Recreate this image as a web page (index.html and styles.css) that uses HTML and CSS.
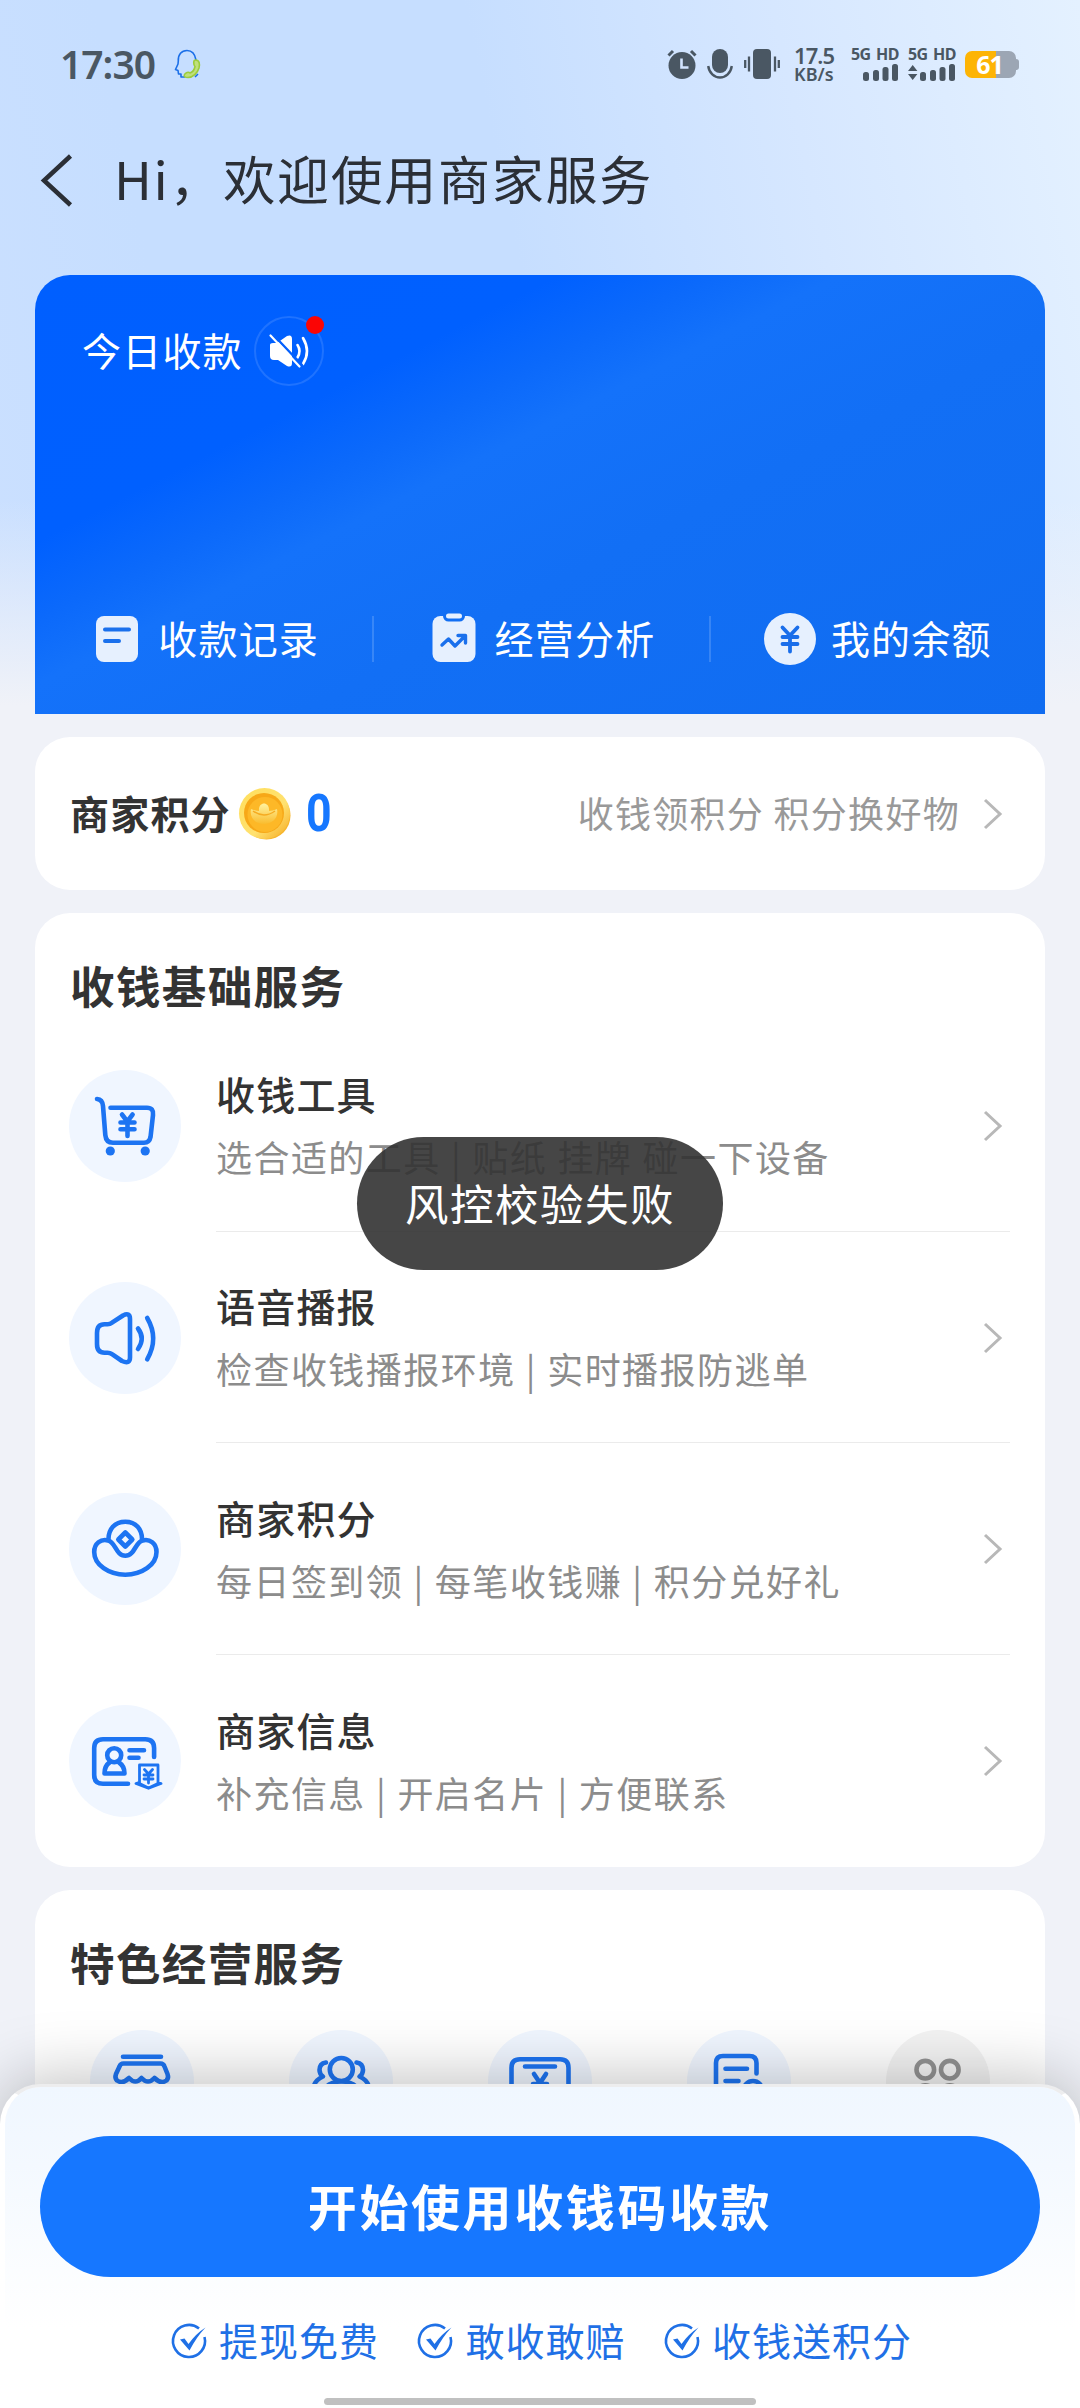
FILE: index.html
```html
<!DOCTYPE html>
<html lang="zh-CN">
<head>
<meta charset="utf-8">
<title>商家服务</title>
<link rel="stylesheet" href="styles.css">
</head>
<body>
<div class="screen">
  <div class="statusbar">
    <span class="clock">17:30</span>
    <svg class="call" width="28" height="30" viewBox="0 0 28 30" fill="none" stroke-width="1.6" stroke-linejoin="round"><path stroke="#1b6fe8" d="M22 11C21 5 17.500 1.500 13 1.500 7.500 1.500 4 5.500 4.300 12L4 15 1.500 20.500 4 21.500 4.500 25H7V28H11M21 28l3-3"/><path fill="#bfe07c" stroke="#9ccc3c" d="M21.500 11c4 0 4.500 4 3.500 8-1.500 5-6 9.500-11 9.500-3 0-4.500-1-3.500-3s4-3 5.500-1.500c2.500-1 4.500-3.500 5-6.500-1.500-1.500-2-6.500.500-6.500z"/></svg>
    <svg class="alarm" width="30" height="30" viewBox="0 0 30 30"><circle cx="15" cy="16.500" r="13.500" fill="#4a5763"/><path d="M1.500 6.500 6 2M28.500 6.500 24 2" stroke="#4a5763" stroke-width="3"/><path d="M14.500 9.500v9h7" stroke="#d2e4ff" stroke-width="2.600" fill="none"/></svg>
    <svg class="mic" width="26" height="30" viewBox="0 0 26 30"><rect x="5" width="16" height="24" rx="8" fill="#4a5763"/><path d="M1.200 17c1 7 6 11.500 11.800 11.500S23.800 24 24.800 17" stroke="#4a5763" stroke-width="2.400" fill="none"/></svg>
    <svg class="vibrate" width="36" height="30" viewBox="0 0 36 30"><rect x="9" width="18" height="30" rx="4" fill="#4a5763"/><path d="M5 7.500v15M31 7.500v15M1.200 11v8M34.800 11v8" stroke="#4a5763" stroke-width="2.300"/></svg>
    <div class="speed"><span class="speed-num">17.5</span><span class="speed-unit">KB/s</span></div>
    <div class="sim sim-1"><span>5G HD</span><svg width="48" height="17" viewBox="0 0 48 17" fill="#4a5763"><rect x="12" y="8" width="6" height="9" rx="2.500"/><rect x="22" y="6" width="6" height="11" rx="2.500"/><rect x="31.500" y="3" width="6" height="14" rx="2.500"/><rect x="41" y="0" width="6" height="17" rx="2.500"/></svg></div>
    <div class="sim sim-2"><span>5G HD</span><svg width="48" height="17" viewBox="0 0 48 17" fill="#4a5763"><path d="M0 7 4.700 1 9.400 7zM0 10h9.400L4.700 16z"/><rect x="12" y="8" width="6" height="9" rx="2.500"/><rect x="22" y="6" width="6" height="11" rx="2.500"/><rect x="31.500" y="3" width="6" height="14" rx="2.500"/><rect x="41" y="0" width="6" height="17" rx="2.500"/></svg></div>
    <div class="battery"><span>61</span></div>
  </div>

  <header class="header">
    <svg class="back" width="34" height="54" viewBox="0 0 34 54" fill="none" stroke="#2b2f36" stroke-width="4.500"><path d="M30.500 3 4 27.500 30.500 52"/></svg>
    <h1>Hi，欢迎使用商家服务</h1>
  </header>

  <section class="hero">
    <div class="today">
      <span>今日收款</span>
      <div class="mute">
        <svg width="40" height="36" viewBox="0 0 40 36" fill="none" stroke="#fff" stroke-linecap="round"><path d="M8 10 18 3q5-2 5 3v24q0 5-5 3L9 27H5q-4 0-4-4V12q0-2 3-2z" fill="#fff" stroke="none"/><path d="M28.500 12q4 6 0 12.500M34 5q8 13.500 0 26" stroke-width="2.600"/><path d="M4.500 2 33 32" stroke="#0561fd" stroke-width="2.400"/><path d="M1.500 2.500 30.500 33.500" stroke-width="2.200"/></svg>
        <i class="dot"></i>
      </div>
    </div>
    <nav class="shortcuts">
      <a><svg width="52" height="52" viewBox="0 0 52 52"><rect x="5" y="3" width="42" height="46" rx="8" fill="#e6f0fe"/><path d="M14 16.500h24M14 28h14" stroke="#1a70ec" stroke-width="4" stroke-linecap="round"/></svg><span>收款记录</span></a>
      <a><svg width="52" height="52" viewBox="0 0 52 52"><rect x="4.500" y="3" width="43" height="46" rx="8" fill="#e6f0fe"/><rect x="16.500" y="-1" width="19" height="8" rx="4" fill="#e6f0fe" stroke="#126ff3" stroke-width="3"/><path d="m14 32 6.500-6 6.500 7 10-10M30 22.500h7.500V30" fill="none" stroke="#1a70ec" stroke-width="3.400" stroke-linecap="round" stroke-linejoin="round"/></svg><span>经营分析</span></a>
      <a><svg width="52" height="52" viewBox="0 0 52 52"><circle cx="26" cy="26" r="26" fill="#e6f0fe"/><path d="m18.500 14.500 7.500 8 7.500-8M18.500 24h15M18.500 31h15M26 23v15.500" fill="none" stroke="#1a6eea" stroke-width="3.800" stroke-linecap="round"/></svg><span>我的余额</span></a>
    </nav>
  </section>

  <section class="card points">
    <strong>商家积分</strong>
    <svg class="coin" width="54" height="54" viewBox="0 0 54 54"><defs><linearGradient id="rim" x1="0" y1="0" x2="1" y2="1"><stop offset="0" stop-color="#ffdf5c"/><stop offset=".6" stop-color="#ffe170"/><stop offset="1" stop-color="#f5a81c"/></linearGradient><linearGradient id="ingot" x1="0" y1="0" x2="0" y2="1"><stop offset="0" stop-color="#fff3a0"/><stop offset="1" stop-color="#f9bc2e"/></linearGradient></defs><circle cx="28.500" cy="28.500" r="24" fill="#f7b52c"/><circle cx="26.500" cy="26.500" r="25.500" fill="url(#rim)"/><circle cx="26" cy="26" r="20" fill="#f7a818"/><circle cx="27" cy="27.500" r="17.500" fill="#fdb827"/><path d="M13 22q5 2 8 2c-1-10 11-10 10 0q4 0 8-2c2 9-5 15-13 15s-15-6-13-15z" fill="url(#ingot)"/><path d="M15 24q11 8 22 0" fill="none" stroke="#f5ab22" stroke-width="1.500"/></svg>
    <span class="score">0</span>
    <span class="hint">收钱领积分 积分换好物</span>
    <svg class="chev" width="22" height="34" viewBox="0 0 22 34"><path d="m3 3 15 14L3 31"/></svg>
  </section>

  <section class="card services">
    <h2>收钱基础服务</h2>
    <div class="row">
      <svg class="ico" width="112" height="112" viewBox="0 0 112 112"><path d="M28 29q5.500.500 6 7l2.300 29q.700 7.700 7.700 7.700h31q5.500 0 6.500-5.500L84 45q.800-7.300-6-7.300H41.500"/><path d="m53 44.500 5.300 7 5.300-7M51.500 52.500h14M51.500 59.300h14M58.500 52v14"/><circle cx="41.300" cy="81" r="4.600" class="solid"/><circle cx="76.200" cy="81" r="4.600" class="solid"/></svg>
      <div class="body"><div class="text"><h3>收钱工具</h3><p>选合适的工具 | 贴纸 挂牌 碰一下设备</p></div><svg class="chev" width="22" height="34" viewBox="0 0 22 34"><path d="m3 3 15 14L3 31"/></svg></div>
    </div>
    <div class="row">
      <svg class="ico" width="112" height="112" viewBox="0 0 112 112"><path d="M28 51v11q0 8.700 7.500 8.700h3q2.500 0 4.500 1.500l10 6.800q8 3.500 8-3.500V37q0-7-7-3.500l-11 7.200q-2 1.600-4.500 1.600h-3Q28 42.300 28 51zM69 46.500q7.500 10 0 20.500M78.200 36q12 20.500 0 41.300"/></svg>
      <div class="body"><div class="text"><h3>语音播报</h3><p>检查收钱播报环境 | 实时播报防逃单</p></div><svg class="chev" width="22" height="34" viewBox="0 0 22 34"><path d="m3 3 15 14L3 31"/></svg></div>
    </div>
    <div class="row">
      <svg class="ico" width="112" height="112" viewBox="0 0 112 112"><path d="M39 47.500C32 45.500 25.200 50.500 25.200 59 25.200 72 40 81.700 56.300 81.700S87.500 72 87.500 59c0-8.500-6.800-13.500-13.800-11.500-7.700 1.500-7.700 15.200-17.400 15.200S46.700 49 39 47.500zM39.500 47.500C39 36 46 28.700 56.300 28.700S73.500 36 73 47.500"/><path d="m56.300 39.500 7 7-7 7-7-7z"/></svg>
      <div class="body"><div class="text"><h3>商家积分</h3><p>每日签到领 | 每笔收钱赚 | 积分兑好礼</p></div><svg class="chev" width="22" height="34" viewBox="0 0 22 34"><path d="m3 3 15 14L3 31"/></svg></div>
    </div>
    <div class="row">
      <svg class="ico" width="112" height="112" viewBox="0 0 112 112"><path d="M59 78.800H34q-8.800 0-8.800-8.800V43q0-8.800 8.800-8.800h42.300q8.800 0 8.800 8.800v9"/><circle cx="45.200" cy="50.200" r="7"/><path d="M40.500 57.500q-5 3.500-5 11h20q0-7.500-5.500-11M60.500 45.200H75M60.500 52.800h9"/><path class="thin" d="M70.500 60h18.500v18.500l-9.500 4.500-9-4.500zM70 77.500l-3 1 12.500 4.800L92 78.500l-3-1M75.500 64.500l4 4.500 4-4.500M75 70h9M75 74h9M79.500 69v9"/></svg>
      <div class="body"><div class="text"><h3>商家信息</h3><p>补充信息 | 开启名片 | 方便联系</p></div><svg class="chev" width="22" height="34" viewBox="0 0 22 34"><path d="m3 3 15 14L3 31"/></svg></div>
    </div>
  </section>

  <section class="card featured">
    <h2>特色经营服务</h2>
    <div class="grid">
      <svg class="ico small" width="104" height="104" viewBox="0 0 104 104"><path d="M33 26.700h38M33.500 33.500h37q3 0 4 3L77.500 44q1.500 4-1 6.500-5.500 4-12-2.500-6.500 7-13 0-6 7-12.500 0-6.500 6.500-12 2.500-2.500-2.500-1-6.500L29.500 36.500q1-3 4-3zM32 56v22h40V56"/></svg>
      <svg class="ico small" width="104" height="104" viewBox="0 0 104 104"><circle cx="52.300" cy="39.500" r="11.500"/><path d="M31 72c0-13 9-20.500 21.300-20.500S73.500 59 73.500 72zM37 32.500q-6.500 1-6.500 7.500 0 4 3.500 6.500-7 3-9 9M67.500 32.500q6.500 1 6.500 7.500 0 4-3.500 6.500 7 3 9 9"/></svg>
      <svg class="ico small" width="104" height="104" viewBox="0 0 104 104"><path d="M32 29.300h40q8.500 0 8.500 8.500V66q0 8.500-8.500 8.500H32q-8.500 0-8.500-8.500V37.800q0-8.500 8.500-8.500zM37 36.500h30M46 44l6 9 6-9M45 54h14M52 53v14"/></svg>
      <svg class="ico small" width="104" height="104" viewBox="0 0 104 104"><path d="M69.500 43.500V33q0-7-7-7H36q-7 0-7 7v38q0 7 7 7h14M38.500 38.700h21.500M38.500 51h13"/><circle cx="66" cy="60.500" r="9.500"/></svg>
      <svg class="ico small more" width="104" height="104" viewBox="0 0 104 104"><circle cx="39.300" cy="39.700" r="8.800"/><circle cx="63.800" cy="39.700" r="8.800"/><circle cx="39.300" cy="64" r="8.800"/><circle cx="63.800" cy="64" r="8.800"/></svg>
    </div>
  </section>

  <footer class="sheet">
    <button class="cta">开始使用收钱码收款</button>
    <ul class="perks">
      <li><svg width="36" height="36" viewBox="0 0 36 36"><path class="ring" d="M28 5.500a16 16 0 1 0 5.500 8.500"/><path class="tick" d="m9 16.500 4.500-1 4 5.500Q25 10.500 34.500 4.500q-9 9.500-16 23z"/></svg><span>提现免费</span></li>
      <li><svg width="36" height="36" viewBox="0 0 36 36"><path class="ring" d="M28 5.500a16 16 0 1 0 5.500 8.500"/><path class="tick" d="m9 16.500 4.500-1 4 5.500Q25 10.500 34.500 4.500q-9 9.500-16 23z"/></svg><span>敢收敢赔</span></li>
      <li><svg width="36" height="36" viewBox="0 0 36 36"><path class="ring" d="M28 5.500a16 16 0 1 0 5.500 8.500"/><path class="tick" d="m9 16.500 4.500-1 4 5.500Q25 10.500 34.500 4.500q-9 9.500-16 23z"/></svg><span>收钱送积分</span></li>
    </ul>
    <div class="homebar"></div>
  </footer>

  <div class="toast">风控校验失败</div>
</div>
</body>
</html>
```
FILE: styles.css
```css
* { box-sizing: border-box; margin: 0; padding: 0; }
body {
  width: 1080px;
  font-family: "Noto Sans CJK SC", "Noto Sans", sans-serif;
  color: #333;
}
svg { display: block; flex: none; overflow: visible; }
.screen {
  position: relative;
  width: 1080px;
  height: 2408px;
  overflow: hidden;
  background:
    linear-gradient(180deg, rgba(240,242,248,0) 500px, #f0f2f8 705px),
    linear-gradient(78deg, #cbe0ff 0, #c6deff 20%, #c6deff 50%, #d6e7ff 75%, #e4f1ff 100%) 0 0 / 100% 720px no-repeat,
    #f0f2f8;
}

.statusbar {
  display: flex;
  align-items: center;
  height: 128px;
  padding-left: 60px;
  color: #4a5763;
  font-family: "Noto Sans", sans-serif;
  white-space: nowrap;
}
.clock { width: 96px; font-size: 39px; font-weight: 600; letter-spacing: -1px; line-height: 48px; }
.call { margin-left: 18px; }
.alarm { margin-left: 465px; }
.mic { margin-left: 10px; }
.vibrate { margin-left: 11px; }
.speed { display: flex; flex-direction: column; width: 45px; margin-left: 14px; font-weight: 600; }
.speed-num { font-size: 22px; line-height: 19px; letter-spacing: -.9px; }
.speed-unit { font-size: 18px; line-height: 18px; letter-spacing: 0; font-weight: 600; }
.sim { display: flex; flex-direction: column; gap: 3px; width: 48px; margin-left: 12px; }
.sim-2 { margin-left: 9px; }
.sim span { font-size: 16px; line-height: 14px; font-weight: 700; letter-spacing: -.6px; word-spacing: 2px; }
.battery {
  position: relative;
  display: flex;
  align-items: center;
  justify-content: center;
  width: 51px;
  height: 27px;
  margin-left: 9px;
  padding-right: 2px;
  border-radius: 7px;
  background: linear-gradient(90deg, #fdb405 61%, #9ca6b4 61%);
  color: #fff;
  font-size: 25px;
  font-weight: 700;
  letter-spacing: -1px;
  line-height: 27px;
}
.battery::after {
  content: "";
  position: absolute;
  right: -3px;
  top: 8px;
  width: 3px;
  height: 11px;
  border-radius: 0 3px 3px 0;
  background: #9ca6b4;
}

.header { display: flex; align-items: center; height: 104px; padding-left: 40px; }
.header h1 {
  margin-left: 40px;
  padding-bottom: 5px;
  font-size: 52px;
  line-height: 76px;
  font-weight: 400;
  letter-spacing: 1.700px;
  color: #2b2f36;
}

.hero {
  display: flex;
  flex-direction: column;
  justify-content: space-between;
  width: 1010px;
  height: 439px;
  margin: 43px 35px 0;
  border-radius: 35px 35px 0 0;
  background: linear-gradient(153deg, #005fff 0, #0060ff 28%, #0b69fb 36%, #1472fa 43%, #126ff5 60%, #106cf0 100%);
  color: #fff;
  font-size: 39px;
  letter-spacing: 1.2px;
}
.today { display: flex; align-items: center; height: 70px; margin-top: 41px; padding-left: 47px; }
.today span, .shortcuts span, .points strong, .hint { padding-bottom: 4px; }
.mute {
  position: relative;
  display: flex;
  align-items: center;
  justify-content: center;
  width: 70px;
  height: 70px;
  margin-left: 11px;
  border: 2.5px solid rgba(255,255,255,.12);
  border-radius: 50%;
}
.dot { position: absolute; top: -2.5px; right: -2.5px; width: 18px; height: 18px; border-radius: 50%; background: #fb0505; }
.shortcuts { display: flex; height: 46px; margin-bottom: 52px; }
.shortcuts a { flex: 1; display: flex; align-items: center; justify-content: center; gap: 15px; }
.shortcuts a:first-child { padding-left: 3px; }
.shortcuts a + a { border-left: 2px solid rgba(255,255,255,.16); }

.card { width: 1010px; margin: 23px 35px 0; border-radius: 35px; background: #fff; }
.chev { fill: none; stroke: #b8b8b8; stroke-width: 3; }
.points { display: flex; align-items: center; height: 153px; padding: 0 41px 0 35px; }
.points strong { font-size: 39px; font-weight: 700; letter-spacing: 1.2px; }
.coin { margin-left: 7px; }
.score { margin-left: 12px; font: 700 52px/60px "Roboto", sans-serif; color: #1677ff; transform: scaleX(.86); }
.hint { margin-left: auto; margin-right: 22px; font-size: 36px; letter-spacing: 1.3px; color: #999; }

.card h2 { height: 107px; padding: 39px 0 0 35px; font-size: 44.500px; line-height: 66px; font-weight: 700; letter-spacing: 1.4px; }
.row { display: flex; align-items: center; height: 211.700px; padding-left: 34px; }
.ico { border-radius: 50%; background: #f0f6ff; fill: none; stroke: #1d74f2; stroke-width: 4.600; stroke-linecap: round; stroke-linejoin: round; }
.ico .solid { fill: #1d74f2; stroke: none; }
.ico .thin { stroke-width: 2.800; }
.body {
  flex: 1;
  display: flex;
  align-items: center;
  justify-content: space-between;
  align-self: stretch;
  margin: 0 35px;
  padding: 1px 6px 0 0;
  border-bottom: 1.500px solid #ebebeb;
}
.row:last-child .body { border-bottom: 0; }
.text { padding-bottom: 2px; }
.text h3 { font-size: 39px; line-height: 62px; font-weight: 500; letter-spacing: 1.2px; }
.text p { padding-top: 1px; font-size: 36px; line-height: 62px; letter-spacing: 1.450px; word-spacing: .7px; color: #8c8c8c; white-space: nowrap; }

.featured { height: 420px; }
.featured h2 { height: 140px; }
.grid { display: grid; grid-template-columns: repeat(5, 1fr); justify-items: center; padding: 0 8px; }
.more { background: #f3f3f3; stroke: #929292; }

.sheet {
  position: absolute;
  left: 0;
  right: 0;
  bottom: 0;
  display: flex;
  flex-direction: column;
  align-items: center;
  height: 324px;
  padding-top: 49px;
  border: 5px solid #fff;
  border-width: 3px 5px 0;
  border-top-color: #ededee;
  border-radius: 40px 40px 0 0;
  background: linear-gradient(180deg, #f0f7ff 0, #f2f8ff 50px, #fff 240px) padding-box #fff;
  box-shadow: 0 -4px 66px rgba(0,0,0,.26);
}
.cta {
  width: 1000px;
  height: 141px;
  padding-bottom: 5px;
  border: 0;
  border-radius: 71px;
  background: #1677ff;
  color: #fff;
  font: 700 49px/1 "Noto Sans CJK SC", sans-serif;
  letter-spacing: 2.600px;
}
.perks { display: flex; gap: 38.500px; height: 60px; margin: 34px 0 0 3px; list-style: none; }
.perks li { display: flex; align-items: center; gap: 12px; font-size: 39px; line-height: 60px; letter-spacing: 1px; color: #1f70e6; }
.perks span { padding-bottom: 5px; }
.ring { fill: none; stroke: #1f70e6; stroke-width: 2.600; }
.tick { fill: #1f70e6; }
.homebar { width: 432px; height: 7px; margin-top: 27px; border-radius: 4px; background: #c0c0c0; }

.toast {
  position: absolute;
  left: 357px;
  top: 1137px;
  width: 366px;
  height: 133px;
  border-radius: 67px;
  background: rgba(50,50,50,.9);
  color: #fff;
  font-size: 43.500px;
  letter-spacing: 1.500px;
  line-height: 132px;
  text-align: center;
}
```
